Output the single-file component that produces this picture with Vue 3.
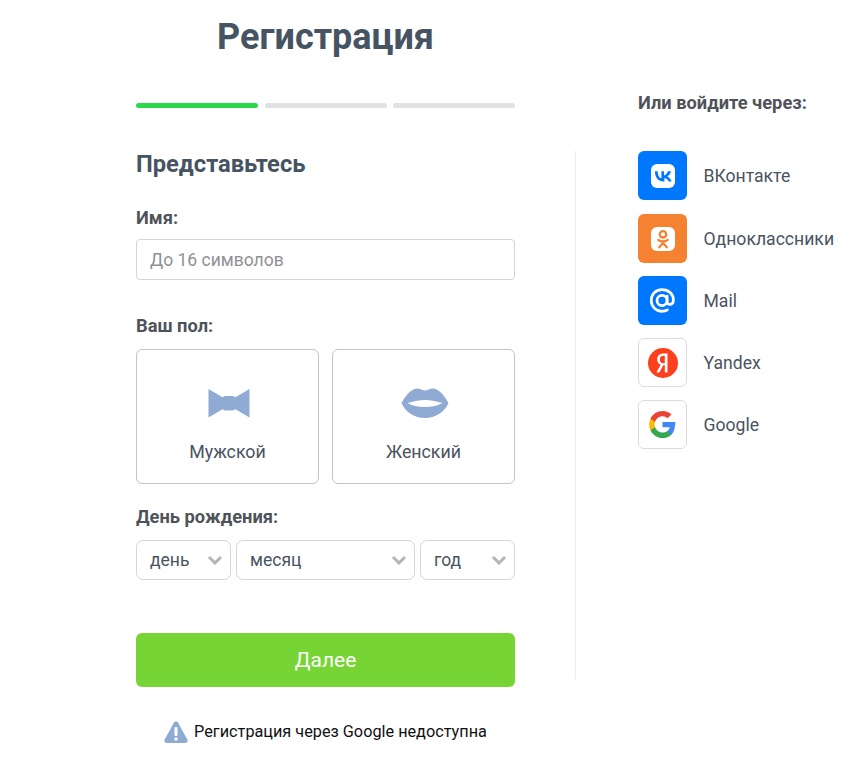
<script setup>
const steps = [true, false, false]
const socials = [
  { name: 'ВКонтакте', cls: 'vk' },
  { name: 'Одноклассники', cls: 'ok' },
  { name: 'Mail', cls: 'mail' },
  { name: 'Yandex', cls: 'ya' },
  { name: 'Google', cls: 'go' }
]
const selects = [
  { label: 'день', cls: 'day' },
  { label: 'месяц', cls: 'month' },
  { label: 'год', cls: 'year' }
]
</script>

<template>
  <div class="page">
    <div class="main">
      <h1 class="title">Регистрация</h1>
      <div class="progress">
        <span v-for="(s, i) in steps" :key="i" class="step" :class="{ on: s }"></span>
      </div>
      <h2 class="heading">Представьтесь</h2>
      <div class="label name-label">Имя:</div>
      <div class="input">До 16 символов</div>
      <div class="label gender-label">Ваш пол:</div>
      <div class="genders">
        <div class="gender">
          <svg class="bow" width="42" height="30" viewBox="0 0 42 30">
            <path fill="#8fabd3" d="M.5 1 15 9.500H27L41.500 1V29.500L27 21H15L.5 29.500Z"/>
            <rect x="14" y="8" width="14" height="14.500" rx="4" fill="#8fabd3"/>
          </svg>
          <span>Мужской</span>
        </div>
        <div class="gender">
          <svg class="lips" width="48" height="30" viewBox="0 0 48 30">
            <path fill="#8fabd3" fill-rule="evenodd" d="M.5 15C4 9 9 1 16 .5 19.500.5 21.500 2.500 24 2.500S28.500.5 32 .5C39 1 44 9 47.500 15 44 23 36 30 24 30S4 23 .5 15ZM6.500 15C12 13.500 18 12 24 12S36 13.500 41.500 15C36 18 30 19 24 19S12 18 6.500 15Z"/>
          </svg>
          <span>Женский</span>
        </div>
      </div>
      <div class="label birth-label">День рождения:</div>
      <div class="selects">
        <div v-for="s in selects" :key="s.cls" class="select" :class="s.cls">
          <span>{{ s.label }}</span>
          <svg width="16" height="10" viewBox="0 0 16 10"><path d="M2 2l6 6 6-6" fill="none" stroke="#b3b6b9" stroke-width="3"/></svg>
        </div>
      </div>
      <button class="next">Далее</button>
      <div class="notice">
        <svg width="24" height="22" viewBox="0 0 24 22">
          <path fill="#8fabd3" d="M12 .5c1 0 1.800.500 2.300 1.400l9 16.600c.900 1.700-.200 3.500-2.100 3.500H2.800C.900 22-.2 20.200.7 18.500l9-16.600C10.200 1 11 .5 12 .5Z"/>
          <rect x="10.500" y="6" width="3" height="9" rx="1" fill="#fff"/>
          <circle cx="12" cy="18" r="1.700" fill="#fff"/>
        </svg>
        <span>Регистрация через Google недоступна</span>
      </div>
    </div>
    <div class="divider"></div>
    <div class="side">
      <div class="side-title">Или войдите через:</div>
      <div class="socials">
        <div v-for="s in socials" :key="s.cls" class="social">
          <span class="badge" :class="s.cls">
            <svg v-if="s.cls === 'vk'" width="26" height="26" viewBox="0 0 26 26">
              <rect x="1" y="1" width="24" height="24" rx="6" fill="#fff"/>
              <path fill="#0077ff" d="M13.800 18.500C8.200 18.500 5 14.700 4.900 8.300h2.800c.1 4.700 2.100 6.700 3.700 7.100V8.300h2.600v4.100c1.600-.2 3.300-2 3.900-4.100H21c-.4 2.500-2.300 4.300-3.600 5.100 1.300.6 3.400 2.200 4.200 5.100h-2.900c-.6-1.900-2.200-3.400-4.300-3.600v3.600Z"/>
            </svg>
            <svg v-else-if="s.cls === 'ok'" width="26" height="26" viewBox="0 0 26 26">
              <rect x="1" y="1" width="24" height="24" rx="6" fill="#fff"/>
              <g fill="none" stroke="#f58230" stroke-width="2.300" stroke-linecap="round">
                <circle cx="13" cy="8.300" r="3.200"/>
                <path d="M8.300 14c2.900 1.900 6.500 1.900 9.400 0M13 15.500v1.800M13 17l-3.800 4.300M13 17l3.800 4.300"/>
              </g>
            </svg>
            <svg v-else-if="s.cls === 'mail'" width="27" height="27" viewBox="0 0 30 30">
              <g fill="none" stroke="#fff" stroke-width="3" stroke-linecap="round">
                <circle cx="14.500" cy="15" r="5.600"/>
                <path d="M20.100 10v6.500c0 4 6.700 4 7-1.500.3-7-5-12-12.600-12S2.500 8.500 2.500 15s5 12 12 12c2.500 0 4.500-.5 6-1.500"/>
              </g>
            </svg>
            <svg v-else-if="s.cls === 'ya'" width="30" height="30" viewBox="0 0 30 30">
              <circle cx="15" cy="15" r="15" fill="#fc3f1d"/>
              <path fill="#fff" d="M19.500 24.500h-2.700v-7.300h-1.500L11.300 24.500H8.400l4.300-7.800c-2.200-1-3.500-2.800-3.500-5.300C9.200 7.800 11.600 5.500 15.300 5.500h4.200ZM16.800 15.300V7.700h-1.500c-2.200 0-3.500 1.400-3.500 3.800 0 2.500 1.400 3.800 3.500 3.800Z"/>
            </svg>
            <svg v-else width="27" height="27" viewBox="0 0 28 28">
              <path fill="#4285f4" d="M27.400 14.300c0-1-.1-1.900-.3-2.800H14v5.300h7.500c-.3 1.700-1.300 3.200-2.800 4.200v3.500h4.500c2.600-2.400 3.700-6 3.700-10.200Z"/>
              <path fill="#34a853" d="M14 28c3.800 0 6.900-1.200 9.200-3.500l-4.500-3.500c-1.200.8-2.800 1.300-4.700 1.300-3.600 0-6.700-2.500-7.800-5.700H1.600v3.600C3.900 24.800 8.600 28 14 28Z"/>
              <path fill="#fbbc05" d="M6.200 16.700C5.600 15 5.600 13 6.200 11.300V7.700H1.600C-.3 11.500-.3 16.500 1.600 20.300Z"/>
              <path fill="#ea4335" d="M14 5.500c2.100 0 3.900.7 5.300 2.100l4-4C21 1.400 17.800 0 14 0 8.600 0 3.900 3.200 1.600 7.700l4.600 3.600C7.300 8 10.400 5.500 14 5.500Z"/>
            </svg>
          </span>
          <span class="social-name">{{ s.name }}</span>
        </div>
      </div>
    </div>
  </div>
</template>

<style>
html, body { background: #fff; }
</style>

<style scoped>
.page {
  display: flex;
  align-items: flex-start;
  padding-left: 136px;
  height: 758px;
  box-sizing: border-box;
  overflow: hidden;
  font-family: Roboto, "Liberation Sans", sans-serif;
  color: #444f5c;
}
.main { width: 379px; flex: none; }
.title {
  margin: 17px 0 0;
  font-size: 36px;
  line-height: 40px;
  font-weight: 700;
  text-align: center;
  color: #465362;
}
.progress { display: flex; margin-top: 46px; }
.step { width: 122px; height: 5px; border-radius: 3px; background: #e2e2e2; }
.step:nth-child(1) { margin-right: 7px; }
.step:nth-child(2) { margin-right: 6px; }
.step.on { background: #2ad84a; }
.heading {
  margin: 43px 0 0;
  font-size: 23.7px;
  line-height: 26px;
  font-weight: 700;
  color: #465362;
}
.label { font-size: 18.3px; line-height: 20px; font-weight: 700; color: #4f5359; }
.name-label { margin-top: 31px; }
.input {
  margin-top: 11px;
  height: 41px;
  box-sizing: border-box;
  padding-left: 13px;
  border: 1px solid #d5d5d5;
  border-radius: 4px;
  font-size: 17.5px;
  line-height: 40px;
  color: #8f9194;
}
.gender-label { margin-top: 36px; }
.genders { display: flex; gap: 13px; margin-top: 13px; }
.gender {
  flex: 1;
  height: 135px;
  box-sizing: border-box;
  border: 1px solid #c4c4c4;
  border-radius: 6px;
  display: flex;
  flex-direction: column;
  align-items: center;
  padding-top: 38px;
  font-size: 17.8px;
  line-height: 21px;
  color: #4a5360;
}
.bow { margin-left: 2px; }
.lips { margin-left: 2px; }
.gender span { margin-top: 23px; }
.birth-label { margin-top: 23px; }
.selects { display: flex; gap: 5px; margin-top: 13px; }
.select {
  height: 40px;
  box-sizing: border-box;
  border: 1px solid #d5d5d5;
  border-radius: 7px;
  padding: 0 7px 0 13px;
  display: flex;
  align-items: center;
  justify-content: space-between;
  font-size: 17.5px;
  color: #4a5360;
}
.day, .year { width: 95px; }
.month { width: 179px; }
.next {
  display: block;
  width: 100%;
  height: 54px;
  margin-top: 53px;
  padding: 0;
  border: 0;
  border-radius: 6px;
  background: #76d535;
  color: #fff;
  font-family: inherit;
  font-size: 21px;
  font-weight: 400;
}
.notice {
  display: flex;
  align-items: center;
  justify-content: center;
  gap: 6px;
  margin-top: 34px;
  font-size: 16.25px;
  line-height: 22px;
  color: #111;
}
.divider { width: 1px; height: 528px; margin: 151px 0 0 60px; background: #ececec; flex: none; }
.side { margin-left: 62px; flex: none; }
.side-title {
  margin-top: 93px;
  font-size: 18.3px;
  line-height: 20px;
  font-weight: 700;
  color: #4f5359;
}
.socials { display: flex; flex-direction: column; gap: 13px; margin-top: 38px; }
.social { display: flex; align-items: center; gap: 16.5px; font-size: 17.6px; color: #4a5360; }
.social:nth-child(2) { margin-top: 1px; }
.badge {
  width: 49px;
  height: 49px;
  box-sizing: border-box;
  border-radius: 6px;
  display: flex;
  align-items: center;
  justify-content: center;
  flex: none;
}
.vk, .mail { background: #0077ff; }
.ok { background: #f58230; }
.ya, .go { background: #fff; border: 1px solid #dcdcdc; }
</style>
